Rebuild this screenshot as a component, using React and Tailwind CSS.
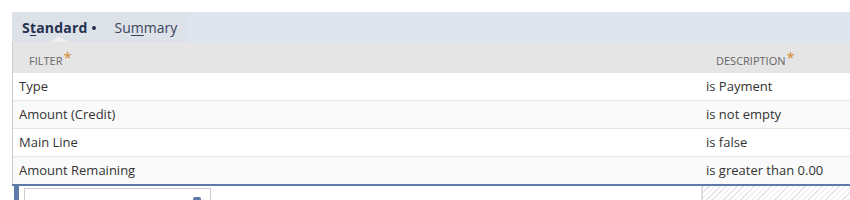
export default function App() {
  const rows = [
    ["Type", "is Payment"],
    ["Amount (Credit)", "is not empty"],
    ["Main Line", "is false"],
    ["Amount Remaining", "is greater than 0.00"],
  ];
  return (
    <div className="w-[850px] h-[200px] bg-white overflow-hidden" style={{ fontFamily: '"Open Sans", sans-serif' }}>
      <div className="h-[12px]" />
      <div className="ml-[12px] h-[30px] bg-[#dfe5ef] flex">
        <div className="relative w-[176px] bg-[#dde1e8] flex items-center text-[14px]">
          <span className="ml-[10px] font-bold text-[#253250] tracking-[0.2px]">
            S<span className="underline underline-offset-2">t</span>andard
          </span>
          <span className="ml-[4px] mt-[2px] w-[4px] h-[4px] rounded-full bg-[#253250]" />
          <span className="ml-[19px] text-[#3a4660]">
            Su<span className="underline underline-offset-2">m</span>mary
          </span>
          <div className="absolute left-[38px] bottom-0 w-0 h-0 border-l-[9px] border-r-[9px] border-b-[5px] border-l-transparent border-r-transparent border-b-[#f0f0f0]" />
        </div>
      </div>
      <div className="ml-[12px] border-l border-[#cccccc]">
        <div className="h-[31px] bg-[#e5e5e5] flex text-[11px] text-[#666666]">
          <div className="w-[687px] pl-[16px] pt-[11px] flex items-start">
            FILTER<span className="text-[#d4872a] text-[15px] leading-[10px] ml-[1px] mt-[-1px]">*</span>
          </div>
          <div className="flex-1 pl-[16px] pt-[11px] flex items-start">
            DESCRIPTION<span className="text-[#d4872a] text-[15px] leading-[10px] ml-[1px] mt-[-1px]">*</span>
          </div>
        </div>
        {rows.map((r, i) => (
          <div
            key={i}
            className={`h-[28px] flex items-center text-[13px] text-[#333333] border-b border-[#e5e5e5] ${i % 2 === 1 ? "bg-[#fafafa]" : "bg-white"}`}
          >
            <div className="w-[687px] pl-[6px]">{r[0]}</div>
            <div className="flex-1 pl-[6px]">{r[1]}</div>
          </div>
        ))}
      </div>
      <div className="ml-[12px] h-[2px] bg-[#5f7aa8] mt-[-1px]" />
      <div className="ml-[14px] flex h-[20px]">
        <div className="w-[5px] h-full bg-[#5f7aa8]" />
        <div className="ml-[5px] mt-[2px] w-[187px] h-[20px] border border-[#cccccc] relative">
          <div className="absolute right-[9px] top-[8px] w-[8px] h-[4px] rounded-sm bg-[#5f7aa8]" />
        </div>
        <div className="ml-[490px] flex-1 h-full border-l-2 border-[#dddddd] bg-[repeating-linear-gradient(135deg,#e4e4e4_0px,#e4e4e4_1px,#ffffff_1px,#ffffff_4px)]" />
      </div>
    </div>
  );
}
